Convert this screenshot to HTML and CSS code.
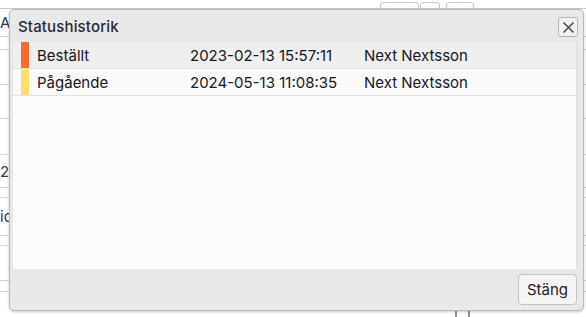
FILE: index.html
```html
<!DOCTYPE html>
<html lang="sv">
<head>
<meta charset="utf-8">
<title>Statushistorik</title>
<link rel="stylesheet" href="styles.css">
</head>
<body>
<div class="page">
  <div class="topbar">
    <span class="tab tab-a"></span>
    <span class="tab tab-b"></span>
    <span class="tab tab-c"></span>
  </div>
  <div class="bg-rows">
    <div class="bg-row h28 txt">A</div>
    <div class="bg-row h13"></div>
    <div class="bg-row h35"></div>
    <div class="bg-row h34"></div>
    <div class="bg-row h36"></div>
    <div class="bg-row h33 txt">20</div>
    <div class="bg-row h10"></div>
    <div class="bg-row h38 txt">ic</div>
    <div class="bg-row h10"></div>
    <div class="bg-row h35"></div>
    <div class="bg-row h11"></div>
    <div class="bg-row h25"></div>
  </div>
  <span class="bg-icon"></span>
</div>

<div class="dialog">
  <div class="dialog-head">
    <span class="dialog-title">Statushistorik</span>
    <button class="close" aria-label="Stäng">
      <svg width="13" height="13" viewBox="0 0 13 13"><path d="M1.5 1.5 L11.5 11.5 M11.5 1.5 L1.5 11.5" stroke="#555" stroke-width="1.7" fill="none"/></svg>
    </button>
  </div>
  <div class="dialog-body">
    <div class="row odd">
      <span class="swatch orange"></span>
      <span class="c-status">Beställt</span>
      <span class="c-date">2023-02-13 15:57:11</span>
      <span class="c-user">Next Nextsson</span>
    </div>
    <div class="row even">
      <span class="swatch yellow"></span>
      <span class="c-status">Pågående</span>
      <span class="c-date">2024-05-13 11:08:35</span>
      <span class="c-user">Next Nextsson</span>
    </div>
  </div>
  <div class="dialog-foot">
    <button class="btn">Stäng</button>
  </div>
</div>
</body>
</html>
```

FILE: styles.css
```css
* { box-sizing: border-box; }
html, body { margin: 0; padding: 0; }
body {
  width: 586px;
  height: 317px;
  overflow: hidden;
  background: #ffffff;
  font-family: Inter, "Noto Sans", sans-serif;
  color: #1c1c24;
  position: relative;
}
.page { width: 586px; height: 317px; position: relative; }
.topbar {
  height: 9px;
  border-bottom: 1px solid #c8c8d0;
  background: #ffffff;
  display: flex;
  padding-left: 380px;
  gap: 1px;
}
.tab {
  display: block;
  height: 7px;
  margin-top: 2px;
  border: 1px solid #c4c4d2;
  border-bottom: none;
  border-radius: 4px 4px 0 0;
}
.tab-a { width: 39px; }
.tab-b { width: 20px; }
.tab-c { width: 28px; margin-left: 5px; }
.bg-rows { display: flex; flex-direction: column; }
.bg-row {
  border-bottom: 1px solid #d4d4da;
  font-size: 15px;
  color: #333;
  display: flex;
  align-items: center;
  padding-left: 0;
}
.bg-row.txt { color: #2a3a5a; }
.h10 { height: 10px; }
.h11 { height: 11px; }
.h13 { height: 13px; }
.h25 { height: 25px; border-bottom: none; }
.h28 { height: 28px; }
.h33 { height: 33px; }
.h34 { height: 34px; }
.h35 { height: 35px; }
.h36 { height: 36px; }
.h38 { height: 38px; }
.bg-icon {
  position: absolute;
  left: 455px;
  top: 309px;
  width: 15px;
  height: 10px;
  border: 2px solid #8a93a6;
  border-bottom: none;
}

.dialog {
  position: absolute;
  left: 9px;
  top: 9px;
  width: 575px;
  height: 302px;
  background: #e8e8e8;
  border: 1px solid #b9b9b9;
  border-radius: 5px;
  box-shadow: 0 1px 3px rgba(0,0,0,0.2);
  display: flex;
  flex-direction: column;
}
.dialog-head {
  height: 32px;
  display: flex;
  align-items: center;
  justify-content: space-between;
  padding: 0 5px 0 8px;
}
.dialog-title {
  font-size: 15px;
  font-weight: 500;
  color: #2a2a33;
  letter-spacing: 0.15px;
}
.close {
  width: 20px;
  height: 20px;
  padding: 0;
  border: 1px solid #b4b4b4;
  border-radius: 3px;
  background: #f2f2f2;
  display: flex;
  align-items: center;
  justify-content: center;
  margin-top: 2px;
}
.dialog-body {
  margin: 0 5px 0 3px;
  flex: 1;
  background: #fcfcfc;
  border-right: 2px solid #e0e0e0;
}
.row {
  height: 27px;
  display: flex;
  align-items: center;
  border-bottom: 1px solid #e2e2e2;
  font-size: 15px;
  color: #16161e;
}
.row.odd { background: #efefef; }
.row.even { background: #fafafa; }
.swatch {
  width: 8px;
  align-self: stretch;
  margin-left: 8px;
  margin-right: 8px;
}
.orange { background: #f96b2a; }
.yellow { background: #fde067; }
.c-status { width: 153px; }
.c-date { width: 174px; }
.dialog-foot {
  height: 41px;
  display: flex;
  justify-content: flex-end;
  align-items: center;
  padding-right: 6px;
}
.btn {
  height: 31px;
  padding: 0 8px;
  font-family: inherit;
  font-size: 15px;
  color: #1c1c24;
  background: #f5f5f5;
  border: 1px solid #c4c4c4;
  border-radius: 4px;
}
```
